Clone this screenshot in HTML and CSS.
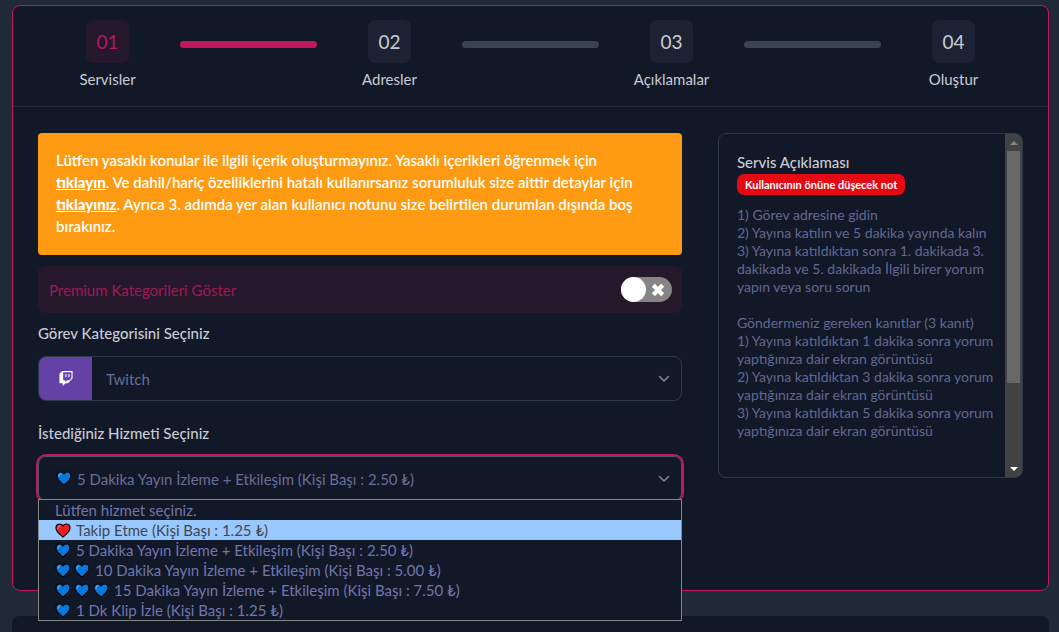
FILE: index.html
```html
<!DOCTYPE html>
<html lang="tr">
<head>
    <meta charset="UTF-8">
    <meta name="viewport" content="width=device-width, initial-scale=1.0">
    <title>Görev Oluştur</title>
    <link rel="stylesheet" href="styles.css">
</head>
<body>
    <svg class="sprite" width="0" height="0" aria-hidden="true">
        <symbol id="heart" viewBox="0 0 16 15">
            <path d="M8 14C5.500 11.800 1 8.900 1 4.900 1 2.600 2.700 1 4.700 1 6.200 1 7.300 1.700 8 2.900 8.700 1.700 9.800 1 11.300 1 13.300 1 15 2.600 15 4.900 15 8.900 10.500 11.800 8 14Z" fill="currentColor" stroke="#05070c" stroke-width="1.200" stroke-linejoin="round"/>
            <path d="M3 5.500C3 3.900 3.700 3 4.900 2.900" fill="none" stroke="#fff" stroke-opacity=".35" stroke-width="1.200" stroke-linecap="round"/>
        </symbol>
        <symbol id="chevron" viewBox="0 0 12 8">
            <path d="M1.500 1.500 6 6l4.500-4.500" fill="none" stroke="currentColor" stroke-width="1.600" stroke-linecap="round" stroke-linejoin="round"/>
        </symbol>
    </svg>

    <main class="card">
        <ol class="steps">
            <li class="step active"><span class="step-number">01</span><span class="step-name">Servisler</span></li>
            <li class="bar done" aria-hidden="true"></li>
            <li class="step"><span class="step-number">02</span><span class="step-name">Adresler</span></li>
            <li class="bar" aria-hidden="true"></li>
            <li class="step"><span class="step-number">03</span><span class="step-name">Açıklamalar</span></li>
            <li class="bar" aria-hidden="true"></li>
            <li class="step"><span class="step-number">04</span><span class="step-name">Oluştur</span></li>
        </ol>

        <div class="content">
            <form class="form">
                <div class="alert">
                    Lütfen yasaklı konular ile ilgili içerik oluşturmayınız. Yasaklı içerikleri öğrenmek için <a href="#yasakli">tıklayın</a>. Ve dahil/hariç özelliklerini hatalı kullanırsanız sorumluluk size aittir detaylar için <a href="#detay">tıklayınız</a>. Ayrıca 3. adımda yer alan kullanıcı notunu size belirtilen durumlan dışında boş bırakınız.
                </div>

                <div class="premium">
                    <label for="premium">Premium Kategorileri Göster</label>
                    <span class="switch">
                        <input type="checkbox" id="premium">
                        <svg class="switch-x" viewBox="0 0 12 12" aria-hidden="true"><path d="M2 2l8 8M10 2l-8 8" stroke="#fff" stroke-width="3.600"/></svg>
                    </span>
                </div>

                <label class="field-label" for="kategori">Görev Kategorisini Seçiniz</label>
                <div class="select-box">
                    <span class="twitch">
                        <svg viewBox="0 0 16 16" aria-hidden="true">
                            <path fill="#fff" fill-rule="evenodd" d="M4 0 1 3v10h3.500v3l3-3h2.500L15 8V0ZM5 1.200h8.800v6.300l-2.300 2.300H9.300l-2.100 2V9.800H5Z"/>
                            <path fill="#fff" d="M7.300 3.200h1.200v3.500H7.300zM10.500 3.200h1.200v3.500h-1.200z"/>
                        </svg>
                    </span>
                    <select id="kategori">
                        <option>Twitch</option>
                    </select>
                    <svg class="chevron" aria-hidden="true"><use href="#chevron"/></svg>
                </div>

                <label class="field-label" for="hizmet">İstediğiniz Hizmeti Seçiniz</label>
                <div class="select-box open">
                    <svg class="heart" aria-hidden="true"><use href="#heart"/></svg>
                    <select id="hizmet">
                        <option>5 Dakika Yayın İzleme + Etkileşim (Kişi Başı : 2.50 ₺)</option>
                    </select>
                    <svg class="chevron" aria-hidden="true"><use href="#chevron"/></svg>
                    <ul class="options" role="listbox" aria-label="Hizmetler">
                        <li role="option">Lütfen hizmet seçiniz.</li>
                        <li role="option" aria-selected="true" class="hover"><svg class="heart red"><use href="#heart"/></svg>Takip Etme (Kişi Başı : 1.25 ₺)</li>
                        <li role="option"><svg class="heart"><use href="#heart"/></svg>5 Dakika Yayın İzleme + Etkileşim (Kişi Başı : 2.50 ₺)</li>
                        <li role="option"><svg class="heart"><use href="#heart"/></svg><svg class="heart"><use href="#heart"/></svg>10 Dakika Yayın İzleme + Etkileşim (Kişi Başı : 5.00 ₺)</li>
                        <li role="option"><svg class="heart"><use href="#heart"/></svg><svg class="heart"><use href="#heart"/></svg><svg class="heart"><use href="#heart"/></svg>15 Dakika Yayın İzleme + Etkileşim (Kişi Başı : 7.50 ₺)</li>
                        <li role="option"><svg class="heart"><use href="#heart"/></svg>1 Dk Klip İzle (Kişi Başı : 1.25 ₺)</li>
                    </ul>
                </div>
            </form>

            <aside class="panel">
                <div class="panel-text">
                    <h2>Servis Açıklaması</h2>
                    <span class="badge">Kullanıcının önüne düşecek not</span>
                    <p>1) Görev adresine gidin<br>
                    2) Yayına katılın ve 5 dakika yayında kalın<br>
                    3) Yayına katıldıktan sonra 1. dakikada 3. dakikada ve 5. dakikada İlgili birer yorum yapın veya soru sorun</p>
                    <p>Göndermeniz gereken kanıtlar (3 kanıt)<br>
                    1) Yayına katıldıktan 1 dakika sonra yorum yaptığınıza dair ekran görüntüsü<br>
                    2) Yayına katıldıktan 3 dakika sonra yorum yaptığınıza dair ekran görüntüsü<br>
                    3) Yayına katıldıktan 5 dakika sonra yorum yaptığınıza dair ekran görüntüsü</p>
                </div>
                <div class="scrollbar">
                    <button type="button" class="scroll-up" aria-label="Yukarı"></button>
                    <div class="scroll-track"><div class="scroll-thumb"></div></div>
                    <button type="button" class="scroll-down" aria-label="Aşağı"></button>
                </div>
            </aside>
        </div>
    </main>

    <section class="next-card"></section>
</body>
</html>
```

FILE: styles.css
```css
* {
    box-sizing: border-box;
}
body {
    margin: 0;
    padding: 5px 10px 0 12px;
    min-height: 100vh;
    display: flex;
    flex-direction: column;
    gap: 25px;
    background-color: #202936;
    color: #c9ccd3;
    font-family: Lato, "Noto Sans", sans-serif;
    font-size: 15px;
}
.sprite {
    position: absolute;
}
.card {
    background-color: #111827;
    border: 1px solid #c2185b;
    border-radius: 8px;
}
.steps {
    display: grid;
    grid-template-columns: repeat(7, 1fr);
    list-style: none;
    margin: 0;
    padding: 14px 24px 17px;
    border-bottom: 1px solid #232b39;
}
.step {
    display: flex;
    flex-direction: column;
    align-items: center;
    gap: 6px;
}
.step-number {
    display: flex;
    justify-content: center;
    align-items: center;
    width: 43px;
    height: 43px;
    border-radius: 7px;
    background-color: #1c2233;
    font-size: 19px;
}
.step-name {
    line-height: 20px;
}
.active .step-number {
    background-color: #26182b;
    color: #b0185a;
}
.bar {
    height: 7px;
    margin: 21px 2px 0;
    border-radius: 4px;
    background-color: #3a4352;
}
.bar.done {
    background-color: #c2185b;
}
.content {
    display: grid;
    grid-template-columns: 19fr 9fr;
    gap: 36px;
    align-items: start;
    padding: 26px 25px 89px;
}
.form {
    display: flex;
    flex-direction: column;
}
.alert {
    padding: 16px 36px 18px 18px;
    border-radius: 4px;
    background-color: #ff9b12;
    color: #fff;
    line-height: 22px;
    font-weight: 600;
}
.alert a {
    color: #fff;
    font-weight: 900;
}
.premium {
    display: flex;
    justify-content: space-between;
    align-items: center;
    height: 47px;
    margin: 11px 0 10px;
    padding: 0 10px 0 11px;
    border-radius: 7px;
    background-color: #26182b;
    color: #a01858;
}
.switch {
    display: flex;
    align-items: center;
    justify-content: flex-end;
    width: 51px;
    height: 25px;
    border-radius: 13px;
    background-color: #858585;
}
.switch input {
    appearance: none;
    width: 25px;
    height: 25px;
    margin: 0 auto 0 0;
    border-radius: 50%;
    background-color: #fff;
}
.switch-x {
    width: 14px;
    height: 14px;
    margin-right: 7px;
}
.field-label {
    line-height: 20px;
    margin-bottom: 13px;
    font-weight: 500;
}
.select-box {
    position: relative;
    display: flex;
    align-items: center;
    height: 45px;
    margin-bottom: 22px;
    padding-right: 11px;
    border: 1px solid #2f3a49;
    border-radius: 8px;
    color: #696e98;
}
.select-box select {
    flex: 1;
    min-width: 0;
    height: 100%;
    padding: 0 14px;
    appearance: none;
    border: 0;
    outline: 0;
    background: none;
    color: inherit;
    font: inherit;
}
.select-box.open {
    margin-bottom: 0;
    padding-left: 17px;
    border-color: #4b5568;
    box-shadow: 0 0 0 2px #c2185b;
}
.select-box.open select {
    padding: 0 0 0 5px;
}
.chevron {
    width: 12px;
    height: 8px;
    color: #7d8492;
}
.twitch {
    display: flex;
    justify-content: center;
    align-items: center;
    width: 53px;
    height: 100%;
    border-radius: 7px 0 0 7px;
    background-color: #6441a4;
}
.twitch svg {
    width: 16px;
    height: 15px;
}
.heart {
    flex: none;
    width: 16px;
    height: 15px;
    color: #0878dc;
}
.heart.red {
    color: #ee1c25;
}
.options {
    position: absolute;
    top: 42px;
    left: -1px;
    right: -1px;
    z-index: 2;
    list-style: none;
    margin: 0;
    padding: 0;
    border: 1px solid #858585;
    background-color: #111827;
    color: #7276ad;
}
.options li {
    display: flex;
    align-items: center;
    gap: 3px;
    height: 20px;
    padding-left: 16px;
    white-space: nowrap;
}
.options li .heart:last-child {
    margin-right: 2px;
}
.options li.hover {
    background-color: #99c8ff;
    color: #3f4652;
}
.panel {
    display: flex;
    height: 345px;
    border: 1px solid #2f3a49;
    border-radius: 8px;
    overflow: hidden;
}
.panel-text {
    flex: 1;
    min-width: 0;
    padding: 18px 6px 0 18px;
    overflow: hidden;
}
.panel h2 {
    margin: 0 0 2px;
    font-size: 15px;
    font-weight: 500;
    line-height: 20px;
}
.badge {
    display: inline-block;
    padding: 0 8px;
    border-radius: 7px;
    background-color: #e50914;
    color: #fff;
    font-size: 11px;
    font-weight: 700;
    line-height: 21px;
}
.panel p {
    margin: 0 0 18px;
    color: #626891;
    font-size: 14px;
    line-height: 18px;
}
.badge + p {
    margin-top: 11px;
}
.scrollbar {
    display: flex;
    flex-direction: column;
    width: 17px;
    background-color: #424242;
}
.scrollbar button {
    display: flex;
    justify-content: center;
    align-items: center;
    height: 17px;
    padding: 0;
    border: 0;
    background: none;
}
.scrollbar button::before {
    content: "";
    border: 4px solid transparent;
}
.scrollbar .scroll-up::before {
    border-top: 0;
    border-bottom-color: #858585;
}
.scrollbar .scroll-down::before {
    border-bottom: 0;
    border-top-color: #fff;
}
.scroll-track {
    flex: 1;
    padding: 0 2px;
}
.scroll-thumb {
    height: 75%;
    background-color: #686868;
}
.next-card {
    flex: 1;
    border-radius: 8px 8px 0 0;
    background-color: #111827;
}
```
